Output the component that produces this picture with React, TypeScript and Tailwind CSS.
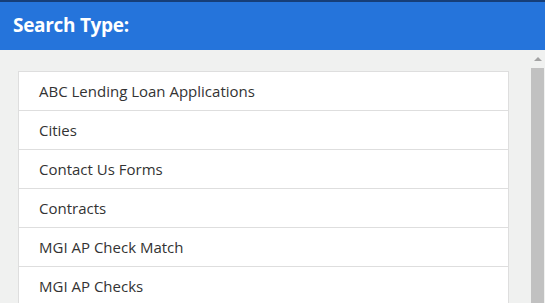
const TYPES = [
  "ABC Lending Loan Applications",
  "Cities",
  "Contact Us Forms",
  "Contracts",
  "MGI AP Check Match",
  "MGI AP Checks",
];

export default function App() {
  return (
    <div className="flex h-[303px] w-[545px] flex-col overflow-hidden bg-[#f0f1f0] font-['Open_Sans',sans-serif]">
      <div className="flex h-[50px] shrink-0 items-center border-t-2 border-[#163e78] bg-[#2574db] px-[13px] pb-[1px]">
        <h1 className="text-[19px] font-bold tracking-[-0.3px] text-white">Search Type:</h1>
      </div>

      <div className="flex min-h-0 flex-1">
        <div className="flex-1 overflow-hidden pl-[18px] pr-[19px] pt-[21px]">
          <ul className="border-x border-b border-[#dedede] bg-white">
            {TYPES.map((t) => (
              <li
                key={t}
                className="flex h-[39px] items-center border-t border-[#dedede] px-[20px] text-[15px] text-[#333]"
              >
                {t}
              </li>
            ))}
          </ul>
        </div>

        {/* scrollbar */}
        <div className="flex w-[17px] shrink-0 flex-col items-center pl-[3px] pr-[1px]">
          <div className="flex h-[18px] items-center justify-center">
            <div className="h-0 w-0 border-x-[4px] border-b-[4px] border-x-transparent border-b-[#a3a3a3]" />
          </div>
          <div className="w-[13px] flex-1 bg-[#c1c1c1]" />
        </div>
      </div>
    </div>
  );
}
